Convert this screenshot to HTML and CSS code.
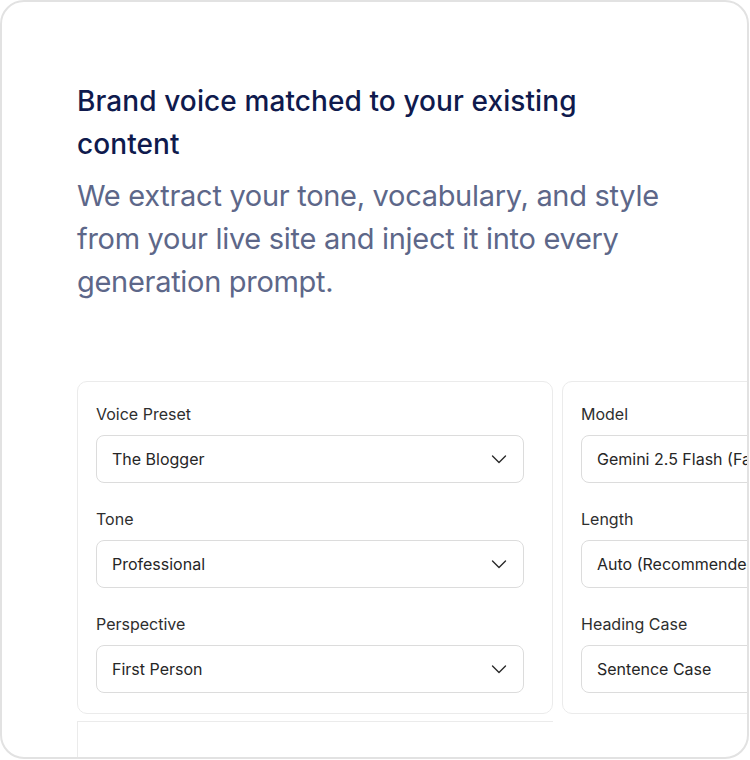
FILE: index.html
```html
<!DOCTYPE html>
<html>
<head>
  <link rel="stylesheet" href="styles.css">
  <title>Brand voice</title>
</head>
<body>
  <div class="frame">
    <h2 class="title">Brand voice matched to your existing content</h2>
    <p class="lead">We extract your tone, vocabulary, and style from your live site and inject it into every generation prompt.</p>

    <div class="panels">
      <div class="card">
        <div class="field">
          <label>Voice Preset</label>
          <div class="select">The Blogger <svg class="chev" viewBox="0 0 16 16"><path d="M1.5 5l6.5 6.5 6.5-6.5"/></svg></div>
        </div>
        <div class="field">
          <label>Tone</label>
          <div class="select">Professional <svg class="chev" viewBox="0 0 16 16"><path d="M1.5 5l6.5 6.5 6.5-6.5"/></svg></div>
        </div>
        <div class="field">
          <label>Perspective</label>
          <div class="select">First Person <svg class="chev" viewBox="0 0 16 16"><path d="M1.5 5l6.5 6.5 6.5-6.5"/></svg></div>
        </div>
      </div>

      <div class="card">
        <div class="field">
          <label>Model</label>
          <div class="select">Gemini 2.5 Flash (Fast) <svg class="chev" viewBox="0 0 16 16"><path d="M1.5 5l6.5 6.5 6.5-6.5"/></svg></div>
        </div>
        <div class="field">
          <label>Length</label>
          <div class="select">Auto (Recommended) <svg class="chev" viewBox="0 0 16 16"><path d="M1.5 5l6.5 6.5 6.5-6.5"/></svg></div>
        </div>
        <div class="field">
          <label>Heading Case</label>
          <div class="select">Sentence Case <svg class="chev" viewBox="0 0 16 16"><path d="M1.5 5l6.5 6.5 6.5-6.5"/></svg></div>
        </div>
      </div>

      <div class="card card-next"></div>
    </div>
  </div>
</body>
</html>
```

FILE: styles.css
```css
body {
  margin: 0;
  background: #fff;
  font-family: Inter, "Noto Sans", sans-serif;
}
.frame {
  width: 749px;
  height: 759px;
  box-sizing: border-box;
  border: 2px solid #e2e2e2;
  border-radius: 24px;
  overflow: hidden;
  padding: 78px 0 0 75px;
  background: #fff;
}
.title {
  margin: 0;
  width: 560px;
  font-size: 28px;
  font-weight: 500;
  line-height: 43px;
  color: #0f1a4d;
  letter-spacing: 0.1px;
}
.lead {
  margin: 8px 0 0;
  width: 600px;
  font-size: 29px;
  font-weight: 400;
  line-height: 43px;
  color: #5d6789;
  letter-spacing: -0.3px;
}
.panels {
  display: grid;
  grid-template-columns: 476px 476px;
  gap: 7px 9px;
  margin-top: 78px;
}
.card {
  border: 1px solid #ebebeb;
  border-radius: 10px;
  padding: 22px 28px 20px 18px;
  display: flex;
  flex-direction: column;
  gap: 26px;
}
.card-next {
  height: 60px;
  border-radius: 0;
  border-right: 0;
  border-bottom: 0;
  padding: 0;
}
.field label {
  display: block;
  font-size: 16px;
  line-height: 20px;
  color: #2e2e2e;
  margin-bottom: 11px;
}
.select {
  height: 48px;
  box-sizing: border-box;
  border: 1px solid #dcdcdc;
  border-radius: 8px;
  padding: 0 16px 0 15px;
  display: flex;
  align-items: center;
  justify-content: space-between;
  font-size: 16px;
  color: #262626;
  white-space: nowrap;
}
.chev {
  width: 16px;
  height: 16px;
  fill: none;
  stroke: #2a2a2a;
  stroke-width: 1.4;
  stroke-linecap: round;
  stroke-linejoin: round;
}
```
